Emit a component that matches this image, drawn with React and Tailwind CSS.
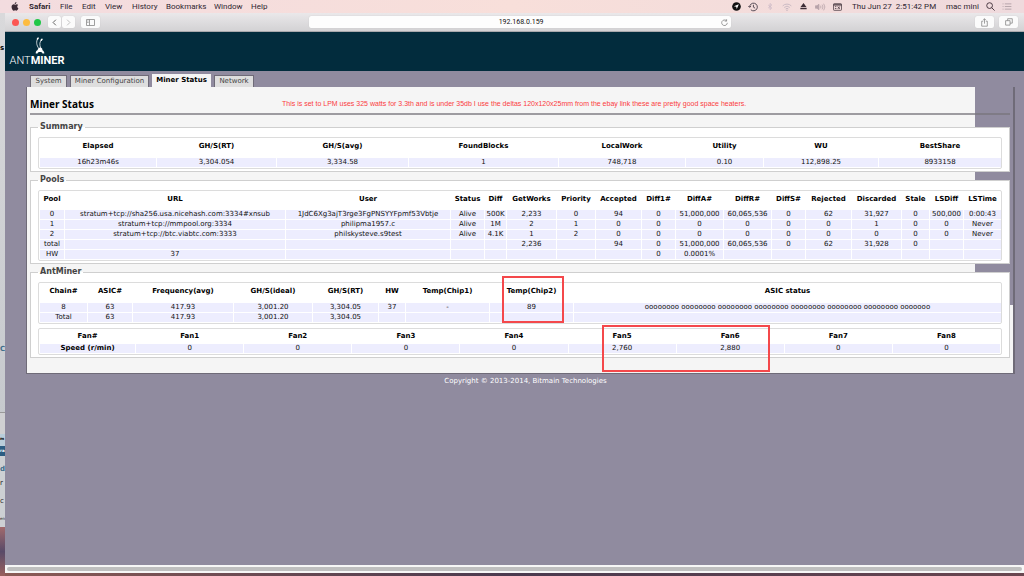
import React from "react";

const summary = {
  cols: ["w-[116px]", "w-[119px]", "w-[131px]", "w-[149px]", "w-[126px]", "w-[77px]", "w-[114px]", "w-[122px]"],
  head: ["Elapsed", "GH/S(RT)", "GH/S(avg)", "FoundBlocks", "LocalWork", "Utility", "WU", "BestShare"],
  rows: [["16h23m46s", "3,304.054", "3,334.58", "1", "748,718", "0.10", "112,898.25", "8933158"]],
};

const pools = {
  cols: [
    "w-[24px]", "w-[220px]", "w-[164px]", "w-[33px]", "w-[21px]", "w-[49px]", "w-[38px]", "w-[45px]", "w-[33px]",
    "w-[47px]", "w-[47px]", "w-[33px]", "w-[45px]", "w-[49px]", "w-[27px]", "w-[33px]", "w-[37px]",
  ],
  head: [
    "Pool", "URL", "User", "Status", "Diff", "GetWorks", "Priority", "Accepted", "Diff1#",
    "DiffA#", "DiffR#", "DiffS#", "Rejected", "Discarded", "Stale", "LSDiff", "LSTime",
  ],
  rows: [
    ["0", "stratum+tcp://sha256.usa.nicehash.com:3334#xnsub", "1JdC6Xg3ajT3rge3FgPNSYYFpmf53Vbtje", "Alive", "500K", "2,233", "0", "94", "0", "51,000,000", "60,065,536", "0", "62", "31,927", "0", "500,000", "0:00:43"],
    ["1", "stratum+tcp://mmpool.org:3334", "philipma1957.c", "Alive", "1M", "2", "1", "0", "0", "0", "0", "0", "0", "1", "0", "0", "Never"],
    ["2", "stratum+tcp://btc.viabtc.com:3333", "philskysteve.s9test", "Alive", "4.1K", "1", "2", "0", "0", "0", "0", "0", "0", "0", "0", "0", "Never"],
    ["total", "", "", "", "", "2,236", "", "94", "0", "51,000,000", "60,065,536", "0", "62", "31,928", "0", "", ""],
    ["HW", "37", "", "", "", "", "", "", "0", "0.0001%", "", "", "", "", "", "", ""],
  ],
};

const chains = {
  cols: ["w-[47px]", "w-[44px]", "w-[100px]", "w-[78px]", "w-[65px]", "w-[26px]", "w-[83px]", "w-[83px]", "w-[427px]"],
  head: ["Chain#", "ASIC#", "Frequency(avg)", "GH/S(ideal)", "GH/S(RT)", "HW", "Temp(Chip1)", "Temp(Chip2)", "ASIC status"],
  rows: [
    ["8", "63", "417.93", "3,001.20", "3,304.05", "37", "-", "89", "oooooooo oooooooo oooooooo oooooooo oooooooo oooooooo oooooooo ooooooo"],
    ["Total", "63", "417.93", "3,001.20", "3,304.05", "", "", "", ""],
  ],
};

const fans = {
  cols: ["w-[95px]", "w-[107px]", "w-[107px]", "w-[107px]", "w-[107px]", "w-[107px]", "w-[107px]", "w-[107px]", "w-[107px]"],
  head: ["Fan#", "Fan1", "Fan2", "Fan3", "Fan4", "Fan5", "Fan6", "Fan7", "Fan8"],
  rows: [["Speed (r/min)", "0", "0", "0", "0", "2,760", "2,880", "0", "0"]],
};

const marks = {
  "Temp(Chip2)": "-top-2 left-3 h-[47px] w-[62px]",
  Fan5: "-top-[5px] left-[33px] h-[47px] w-[168px]",
};

function DataTable({ data, headClass, label, boldFirst }) {
  return (
    <div className="rounded-[2px] border border-[#dcdcdc] bg-white">
      <table aria-label={label} className="w-full table-fixed border-separate border-spacing-[1px] text-center text-[7px] leading-[9px] whitespace-nowrap">
        <colgroup>
          {data.cols.map((c, i) => <col key={i} className={c} />)}
        </colgroup>
        <thead>
          <tr>
            {data.head.map((h) => (
              <th key={h} scope="col" className={`relative p-0 align-top font-bold text-black ${headClass}`}>
                {h}
                {marks[h] && <span className={`pointer-events-none absolute z-10 border-2 border-[#f4484b] ${marks[h]}`} />}
              </th>
            ))}
          </tr>
        </thead>
        <tbody>
          {data.rows.map((r, i) => (
            <tr key={i}>
              {r.map((c, j) => (
                <td key={j} className={`h-[9px] bg-[#ededfe] p-0 ${boldFirst && j === 0 ? "font-bold text-black" : "text-[#111]"}`}>{c}</td>
              ))}
            </tr>
          ))}
        </tbody>
      </table>
    </div>
  );
}

function Section({ title, children }) {
  return (
    <fieldset className="min-w-0 border border-[#cfcfcf] bg-white px-[7px] pb-[2px]">
      <legend className="px-[2px] text-[8px] leading-[12px] font-bold text-[#444]">{title}</legend>
      <div className="flex flex-col gap-[4px] pt-[4px]">{children}</div>
    </fieldset>
  );
}

const Apple = () => (
  <svg viewBox="0 0 14 17" className="h-[9px] w-[8px]" fill="#3c2c36">
    <path d="M9.7 0c.1 1.100-.3 2.100-.9 2.800-.6.700-1.600 1.300-2.500 1.200-.1-1 .4-2.100.9-2.700C7.800.600 8.900.100 9.700 0zM12.900 5.800c-1.100.700-1.700 1.700-1.700 2.900 0 1.500.9 2.700 2.200 3.200-.5 1.500-2 4.500-3.600 4.500-.9 0-1.300-.6-2.500-.6s-1.600.6-2.500.6C2.900 16.400.500 12.800.500 9.300c0-3.300 2.100-5.100 4.200-5.100 1.100 0 2.100.8 2.800.8.700 0 1.800-.8 3.200-.8.700 0 1.700.4 2.200 1.600z" />
  </svg>
);

function MenuBar() {
  const left = [
    ["File", "w-[22px]"], ["Edit", "w-[23px]"], ["View", "w-[27px]"], ["History", "w-[34px]"],
    ["Bookmarks", "w-12"], ["Window", "w-[37px]"], ["Help", "w-6"],
  ];
  return (
    <div className="flex h-[13px] items-center bg-linear-to-r from-[#f3dcdf] via-[#f8dfda] to-[#efdadd] pl-[11px] font-[Roboto,sans-serif] text-[8px] leading-[12px] text-[#2f2630]">
      <div className="w-[18px]"><Apple /></div>
      <button className="w-[31px] text-left font-bold">Safari</button>
      {left.map(([t, w]) => <button key={t} className={`text-left ${w}`}>{t}</button>)}
      <div className="ml-auto flex items-center pr-3">
        <div className="flex items-center gap-[7px] pr-[10px]">
          <svg viewBox="0 0 10 10" className="size-[9px]"><circle cx="5" cy="5" r="4.800" fill="#111" /><path d="M7.600 2.400L5.300 7.900 4.700 5.300 2.100 4.700z" fill="#fff" /></svg>
          <svg viewBox="0 0 12 12" className="size-[10px]" fill="none" stroke="#3c3440" strokeWidth="1"><path d="M2 6a4.600 4.600 0 1 1 1.400 3.300M.400 4.800L2 6.500 3.700 4.800M6.500 3.300V6.200L8.500 7.400" /></svg>
          <svg viewBox="0 0 10 12" className="mx-[2px] h-[9px] w-[6px]" fill="none" stroke="#c9b7c5" strokeWidth="1.200"><path d="M2 3.500l6 5L5 11V1l3 2.500-6 5" /></svg>
          <svg viewBox="0 0 12 10" className="h-[8px] w-[10px]" fill="none" stroke="#c9b9c2" strokeWidth="1.200"><path d="M.600 3.600a7.600 7.600 0 0 1 10.800 0M2.500 5.600a5 5 0 0 1 7 0M4.300 7.400a2.500 2.500 0 0 1 3.400 0" /><circle cx="6" cy="9" r=".5" /></svg>
          <svg viewBox="0 0 10 10" className="mx-[1px] size-[7px]" fill="#3c2c36"><path d="M5 0l4.500 6h-9zM.500 7.300h9V9h-9z" /></svg>
          <svg viewBox="0 0 14 10" className="h-[8px] w-[11px]" stroke="#b7a3aa" fill="none"><path d="M.500 3.500h2L5 1.500v7L2.500 6.500h-2z" fill="#b7a3aa" /><path d="M7 3.300a3 3 0 0 1 0 3.400M9 2a5 5 0 0 1 0 6M11 .800a7 7 0 0 1 0 8.400" /></svg>
          <svg viewBox="0 0 12 10" className="h-[8px] w-[9px]" fill="none" stroke="#40323a"><rect x=".6" y=".6" width="10.800" height="8.800" rx="1" /><path d="M.600 2.200h10.800" strokeWidth="1.600" /><path d="M6.300 4.200l2.800 3.400M9.100 4.200L6.300 7.600M2.500 4.500h2M2.500 7h2" /></svg>
        </div>
        <span className="w-[94px] whitespace-pre">Thu Jun 27  2:51:42 PM</span>
        <span className="w-10">mac mini</span>
        <svg viewBox="0 0 10 10" className="mr-[7px] size-[9px]" fill="none" stroke="#3c2c36"><circle cx="4" cy="4" r="3.200" /><path d="M6.300 6.300L9.500 9.500" /></svg>
        <svg viewBox="0 0 10 8" className="h-[7px] w-[10px]" fill="none" stroke="#b09fa5"><path d="M0 1h1M2.500 1H10M0 4h1M2.500 4H10M0 7h1M2.500 7H10" /></svg>
      </div>
    </div>
  );
}

const toolBtn = "flex h-[12px] items-center justify-center rounded-[2px] bg-[#fbfbfb] shadow-[0_0_1px_#bbb]";

function Toolbar() {
  return (
    <div className="flex h-[19px] items-center border-b border-[#a9a9ad] bg-linear-to-b from-[#eae8ea] to-[#d3d2d4] pr-[6px] pl-[7px]">
      <div className="flex gap-1">
        <button aria-label="Close" className="size-[7px] rounded-full bg-[#fc5753]" />
        <button aria-label="Minimize" className="size-[7px] rounded-full bg-[#fdbc40]" />
        <button aria-label="Zoom" className="size-[7px] rounded-full bg-[#20c748]" />
      </div>
      <div className="ml-[7px] flex gap-px">
        <button aria-label="Back" className={`w-[13px] ${toolBtn}`}><svg viewBox="0 0 6 10" className="h-[7px] w-[5px]" fill="none" stroke="#555" strokeWidth="1.300"><path d="M5 1L1 5l4 4" /></svg></button>
        <button aria-label="Forward" className={`w-[13px] ${toolBtn}`}><svg viewBox="0 0 6 10" className="h-[7px] w-[5px]" fill="none" stroke="#bbb" strokeWidth="1.300"><path d="M1 1l4 4-4 4" /></svg></button>
      </div>
      <button aria-label="Sidebar" className={`ml-[6px] w-[19px] ${toolBtn}`}><svg viewBox="0 0 9 7" className="h-[7px] w-[9px]" fill="none" stroke="#888" strokeWidth=".8"><path d="M.5.500h8v6h-8zM3.500.500v6M1.300 2h1.200M1.300 3.500h1.200" /></svg></button>
      <div className="grow-[6]" />
      <div className="flex h-[12px] w-[42%] items-center rounded-[2px] bg-[#fdfdfd] shadow-[0_0_1px_#bbb]">
        <input aria-label="Address" defaultValue="192.168.0.159" className="w-full min-w-0 bg-transparent pl-3 text-center font-[Roboto,sans-serif] text-[7px] text-[#111] outline-none" />
        <button aria-label="Reload" className="mr-[3px]"><svg viewBox="0 0 10 10" className="size-[7px]" fill="none" stroke="#777"><path d="M7.800 2.500A4 4 0 1 0 9 5.500M8 .300v2.700H5.300" /></svg></button>
      </div>
      <div className="grow-[7]" />
      <div className="flex gap-[5px]">
        <button aria-label="Share" className={`w-[19px] ${toolBtn}`}><svg viewBox="0 0 8 10" className="h-[9px] w-[7px]" fill="none" stroke="#888" strokeWidth=".9"><path d="M2.500 3.500H.8v5.700h6.400V3.500H5.500M4 6.300V.800M2.400 2.300L4 .700l1.600 1.600" /></svg></button>
        <button aria-label="Show tabs" className={`w-[19px] ${toolBtn}`}><svg viewBox="0 0 9 9" className="size-[8px]" fill="none" stroke="#888" strokeWidth=".9"><path d="M.7 3h5v5h-5zM3 3V.800h5.200v5H5.700" /></svg></button>
      </div>
    </div>
  );
}

function Logo() {
  return (
    <div className="flex w-[54px] flex-col items-center gap-px text-white">
      <svg viewBox="0 0 20 34" className="ml-[5px] h-[17px] w-[10px]" fill="none" stroke="#fff" strokeLinecap="round">
        <path d="M7 22C3 17 2 9 5 4M11 21C9 15 9 11 12 7" strokeWidth="1.500" />
        <path d="M5 4l1.200-1.800M12.300 6.500l1.700-2" strokeWidth="3" />
        <path d="M1.500 33C1 29 3 27 5.500 26 5 22 10 20 13 22c2 1 2 3 1.500 4 3 2 4.500 4.500 4 7h-3.500c-.5-2.500-2.500-3-5-3s-4.500.5-5 3z" fill="#fff" stroke="none" />
      </svg>
      <span className="font-[Roboto,sans-serif] text-[11px] leading-[11px] whitespace-nowrap"><span className="font-light">ANT</span><span className="font-bold">MINER</span></span>
    </div>
  );
}

function Tabs() {
  const idle = "h-[12px] border-[#6f6b78] bg-[#dedede] text-[#444]";
  return (
    <nav className="flex items-end gap-[3px] pl-1 text-[7px] leading-[11px]">
      <a href="#system" className={`w-[37px] border border-b-0 text-center ${idle}`}>System</a>
      <a href="#config" className={`w-[79px] border border-b-0 text-center ${idle}`}>Miner Configuration</a>
      <a href="#status" aria-current="page" className="h-[13px] w-[59px] border border-b-0 border-[#f5f5f5] bg-[#f5f5f5] text-center font-bold text-black">Miner Status</a>
      <a href="#network" className={`w-[40px] border border-b-0 text-center ${idle}`}>Network</a>
    </nav>
  );
}

function BackWindow() {
  return (
    <aside className="flex w-[5px] shrink-0 flex-col overflow-hidden bg-linear-to-b from-[#d9d9db] to-[#bfc3c8] text-[7px] leading-[10px] text-[#222]">
      <div className="h-[30px]" />
      <b className="h-[301px] text-black">s</b>
      <b className="h-[68px] text-[#3d6d8a]">C</b>
      <div className="h-[22px] border-t border-[#999] bg-[#d0d0d2]" />
      <b className="h-[12px] bg-[#b9cdda] text-[4px] text-black">m</b>
      <b className="h-[10px] bg-[#2c5d82] text-[4px] text-white">ra</b>
      <div className="flex h-[71px] flex-col bg-[#cdd0d3]">
        <b className="h-[22px] pt-2 text-[#3d6d8a]">d</b>
        <span className="h-[18px]">r</span>
        <span className="h-[18px]">c</span>
        <span className="text-[4px]">en</span>
      </div>
      <div className="grow bg-linear-to-b from-[#a26a6c] via-[#594a68] to-[#9a5f5c]" />
    </aside>
  );
}

export default function App() {
  return (
    <div className="flex min-h-screen flex-col overflow-hidden bg-[#594352] font-['DejaVu_Sans',sans-serif]">
      <MenuBar />
      <div className="flex grow">
        <BackWindow />
        <div className="flex min-w-0 grow flex-col">
          <Toolbar />
          <header className="flex h-[39px] items-start bg-[#022c3d] pt-[5px] pl-[5px]"><Logo /></header>
          <main className="flex grow flex-col bg-[#908b9f] pt-[3px] pr-[9px] pl-[21px]">
            <Tabs />
            <div className="relative border-r-2 border-b border-l border-[#6f6b78] bg-[#f5f5f5] pr-[3px] pb-[15px] pl-[3px]">
              <div className="absolute top-0 right-0 h-[218px] w-[38px] bg-[#908b9f]" />
              <div className="relative flex flex-col">
                <div className="flex h-7 items-center border-b-2 border-[#77757c]/70 pt-[8px]">
                  <h1 className="w-[252px] font-['Open_Sans',sans-serif] text-[10px] leading-[14px] font-bold text-black">Miner Status</h1>
                  <p className="font-['Liberation_Sans',sans-serif] text-[7px] leading-[10px] text-[#fb3b3e]">This is set to LPM uses 325 watts for 3.3th and is under 35db I use the deltas 120x120x25mm from the ebay link these are pretty good space heaters.</p>
                </div>
                <div className="flex flex-col gap-[2px] pt-[6px]">
                  <Section title="Summary"><DataTable label="Summary" data={summary} headClass="h-[18px] pt-[3px]" /></Section>
                  <Section title="Pools"><DataTable label="Pools" data={pools} headClass="h-[17px] pt-[3px]" /></Section>
                  <Section title="AntMiner">
                    <DataTable label="Chains" data={chains} headClass="h-[18px] pt-[3px]" />
                    <DataTable label="Fans" data={fans} headClass="h-[13px] pt-[2px]" boldFirst />
                  </Section>
                </div>
              </div>
            </div>
            <footer className="pt-[3px] pl-[10px] text-center text-[7px] leading-[9px] text-white">Copyright © 2013-2014, Bitmain Technologies</footer>
          </main>
          <div className="flex h-[8px] items-center bg-[#f7f7f7] px-[2px]"><div className="h-[4px] grow rounded-full bg-[#bfbfbf]" /></div>
          <div className="h-[3px] bg-linear-to-r from-[#8c5a55] via-[#4b3a4f] to-[#6a4650]" />
        </div>
      </div>
    </div>
  );
}
